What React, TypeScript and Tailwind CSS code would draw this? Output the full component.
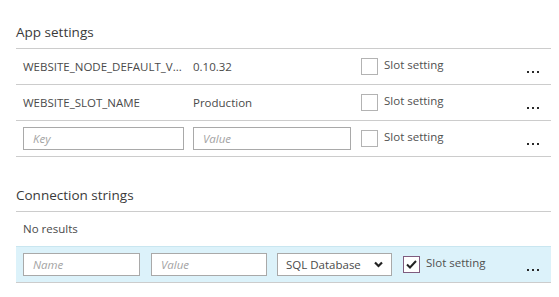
import React from "react";

const font = { fontFamily: '"Open Sans", "Noto Sans", sans-serif' };

function Dots() {
    return (
        <div className="ml-auto mr-[12px] mt-[10px] flex items-center gap-[3px]">
            <span className="h-[2px] w-[2px] bg-[#2a2a2a]" />
            <span className="h-[2px] w-[2px] bg-[#2a2a2a]" />
            <span className="h-[2px] w-[2px] bg-[#2a2a2a]" />
        </div>
    );
}

function SlotSetting({ checked = false }: { checked?: boolean }) {
    return (
        <div className="flex items-center">
            <div
                className={
                    "flex h-[17px] w-[17px] items-center justify-center bg-white border " +
                    (checked ? "border-[#7f5c7f]" : "border-[#b3b3b3]")
                }
            >
                {checked && (
                    <svg width="11" height="9" viewBox="0 0 11 9">
                        <path d="M1 4.5 L4 7.5 L10 1" fill="none" stroke="#222" strokeWidth="2" />
                    </svg>
                )}
            </div>
            <span className="ml-[6px] -mt-[3px] text-[11.5px] text-[#505050]">Slot setting</span>
        </div>
    );
}

function Field({ placeholder, className }: { placeholder: string; className: string }) {
    return (
        <div className={"flex h-[23px] items-center border border-[#a9a9a9] bg-white pl-[9px] " + className}>
            <span className="text-[11.5px] italic text-[#a3a3a3]">{placeholder}</span>
        </div>
    );
}

function SettingRow({ name, value }: { name: string; value: string }) {
    return (
        <div className="flex h-[36px] items-center border-b border-[#cccccc] pl-[7px]">
            <span className="w-[170px] text-[11.5px] text-[#4a4a4a]">{name}</span>
            <span className="w-[168px] text-[11.5px] text-[#4a4a4a]">{value}</span>
            <SlotSetting />
            <Dots />
        </div>
    );
}

function Heading({ children, top }: { children: React.ReactNode; top: string }) {
    return (
        <div className={"border-b border-[#cccccc] pb-[7px] text-[13.5px] leading-[18px] text-[#3a3a3a] " + top}>
            {children}
        </div>
    );
}

export default function App() {
    return (
        <div className="h-[297px] w-[559px] overflow-hidden bg-white" style={font}>
            <div className="ml-4 w-[535px]">
                <Heading top="pt-[23px]">App settings</Heading>
                <SettingRow name="WEBSITE_NODE_DEFAULT_V..." value="0.10.32" />
                <SettingRow name="WEBSITE_SLOT_NAME" value="Production" />
                <div className="flex h-[36px] items-center border-b border-[#cccccc] pl-[7px]">
                    <Field placeholder="Key" className="w-[161px]" />
                    <Field placeholder="Value" className="ml-[9px] w-[158px]" />
                    <div className="ml-[10px]">
                        <SlotSetting />
                    </div>
                    <Dots />
                </div>

                <Heading top="pt-[29px]">Connection strings</Heading>
                <div className="flex h-[34px] items-center pl-[7px] text-[11.5px] text-[#4a4a4a]">No results</div>
                <div className="flex h-[37px] items-center border-t border-b border-t-[#c9e6f0] border-b-[#cccccc] bg-[#dcf2fa] pl-[7px]">
                    <Field placeholder="Name" className="w-[117px]" />
                    <Field placeholder="Value" className="ml-[11px] w-[116px]" />
                    <div className="ml-[10px] flex h-[23px] w-[115px] items-center justify-between border border-[#a9a9a9] bg-white pl-[8px] pr-[8px]">
                        <span className="text-[11.5px] text-[#4a4a4a]">SQL Database</span>
                        <svg width="9" height="7" viewBox="0 0 9 7">
                            <path d="M1 1.5 L4.5 5 L8 1.5" fill="none" stroke="#222" strokeWidth="2.2" />
                        </svg>
                    </div>
                    <div className="ml-[11px]">
                        <SlotSetting checked />
                    </div>
                    <Dots />
                </div>
            </div>
        </div>
    );
}
